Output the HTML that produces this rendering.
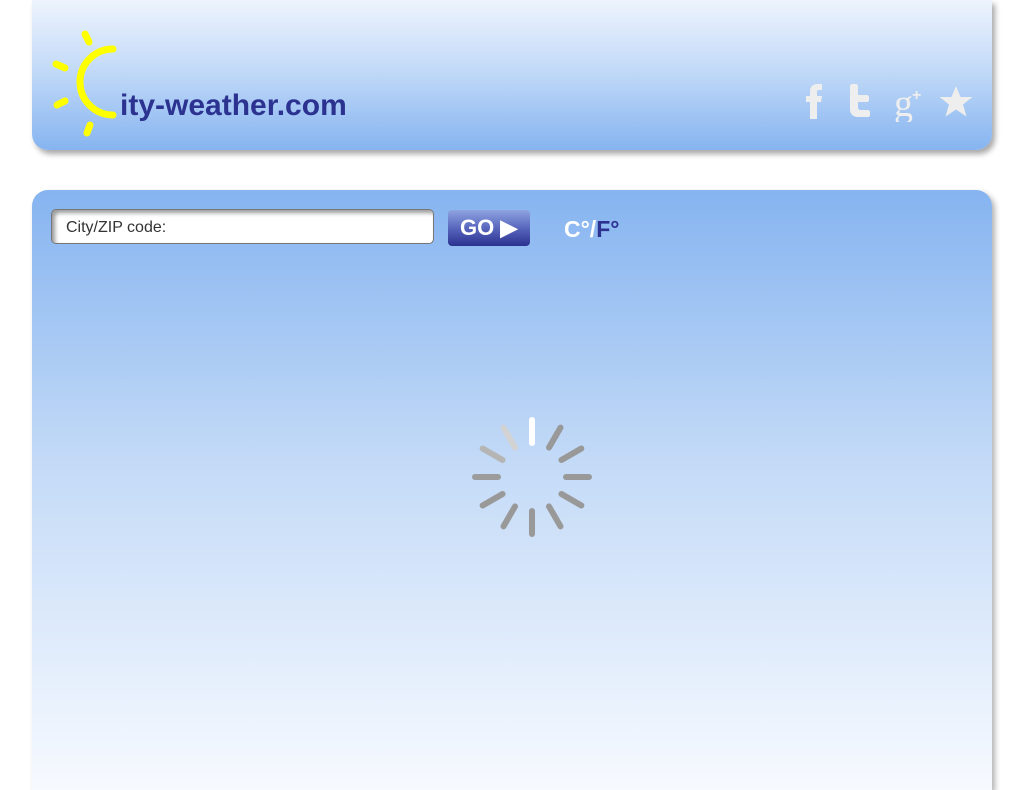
<!DOCTYPE html>
<html><head><meta charset="utf-8"><style>
html,body{margin:0;padding:0;background:#fff;width:1024px;height:768px;overflow:hidden;font-family:"Liberation Sans",sans-serif}
#hdr{position:absolute;left:32px;top:0;width:960px;height:150px;border-radius:0 0 16px 16px;background:linear-gradient(#eef4fd,#c4dbf8 45%,#86b4f0);box-shadow:3px 4px 6px rgba(0,0,0,.35)}
#main{position:absolute;left:32px;top:190px;width:960px;height:600px;border-radius:16px 16px 0 0;background:linear-gradient(#86b4f0,#c3daf7 45%,#f7faff 100%);box-shadow:3px 3px 6px rgba(0,0,0,.3)}
#logo{position:absolute;left:120px;top:89px;font-size:30px;font-weight:bold;color:#2b3290;letter-spacing:0px}
#inp{position:absolute;left:51px;top:209px;width:381px;height:33px;border:1px solid #777;border-radius:5px;background:#fff;box-shadow:inset 3px 3px 4px rgba(0,0,0,.4)}
#inp span{position:absolute;left:14px;top:9px;font-size:16px;color:#333}
#go{position:absolute;left:448px;top:210px;width:82px;height:36px;border-radius:4px;background:linear-gradient(#8fa4e0,#5866bd 50%,#2b3290);color:#fff;font-weight:bold;font-size:22px;line-height:36px;text-indent:12px}
#cf{position:absolute;left:564px;top:216px;font-size:23px;font-weight:bold;color:#fff}
</style></head><body>
<div id="hdr"></div>
<svg style="position:absolute;left:0;top:0" width="140" height="150">
<g stroke="#ffff00" stroke-linecap="round" fill="none">
<path d="M113 49 A33 33 0 0 0 113 115" stroke-width="7"/>
<line x1="85" y1="34" x2="89" y2="42" stroke-width="7"/>
<line x1="56" y1="64" x2="65" y2="68" stroke-width="7"/>
<line x1="57" y1="105" x2="65" y2="101" stroke-width="7"/>
<line x1="87" y1="133" x2="90" y2="125" stroke-width="7"/>
</g></svg>
<div id="logo">ity-weather.com</div>
<svg style="position:absolute;left:800px;top:82px" width="180" height="40" fill="#eeeeee">
<path d="M10 37V20H6v-6h4V10c0-6 3-8 8-8h4v6h-3c-2 0-2 1-2 2v4h5l-1 6h-4v17z"/>
<path d="M50 4c0-1 1-2 3-2h3c1 0 2 1 2 2v9h9c1 0 2 1 2 2v3c0 1-1 2-2 2h-9v5c0 2 1 3 3 3h7c1 0 2 1 2 2v3c0 1-1 2-2 2H58c-5 0-8-3-8-8z"/>
<text x="94" y="34" font-family="Liberation Serif,serif" font-size="38" fill="#eee">g</text>
<text x="112" y="18" font-family="Liberation Sans,sans-serif" font-size="16" font-weight="bold" fill="#eee">+</text>
<path d="M156 4l4.5 11h12l-9.5 7.5 3.5 12-10.5-7-10.5 7 3.5-12-9.5-7.5h12z"/>
</svg>
<div id="main"></div>
<div id="inp"><span>City/ZIP code:</span></div>
<div id="go">GO ▶</div>
<div id="cf">C°/<span style="color:#2b3290">F°</span></div>
<svg style="position:absolute;left:462px;top:407px" width="140" height="140">
<g transform="translate(70,70)" stroke-width="6" stroke-linecap="round">
<line x1="0" y1="-34" x2="0" y2="-57" stroke="#ffffff"/>
<line x1="0" y1="-34" x2="0" y2="-57" stroke="#999" transform="rotate(30)"/>
<line x1="0" y1="-34" x2="0" y2="-57" stroke="#999" transform="rotate(60)"/>
<line x1="0" y1="-34" x2="0" y2="-57" stroke="#999" transform="rotate(90)"/>
<line x1="0" y1="-34" x2="0" y2="-57" stroke="#999" transform="rotate(120)"/>
<line x1="0" y1="-34" x2="0" y2="-57" stroke="#999" transform="rotate(150)"/>
<line x1="0" y1="-34" x2="0" y2="-57" stroke="#999" transform="rotate(180)"/>
<line x1="0" y1="-34" x2="0" y2="-57" stroke="#999" transform="rotate(210)"/>
<line x1="0" y1="-34" x2="0" y2="-57" stroke="#999" transform="rotate(240)"/>
<line x1="0" y1="-34" x2="0" y2="-57" stroke="#9c9c9c" transform="rotate(270)"/>
<line x1="0" y1="-34" x2="0" y2="-57" stroke="#b5b5b5" transform="rotate(300)"/>
<line x1="0" y1="-34" x2="0" y2="-57" stroke="#d2d2d2" transform="rotate(330)"/>
</g></svg>
</body></html>
